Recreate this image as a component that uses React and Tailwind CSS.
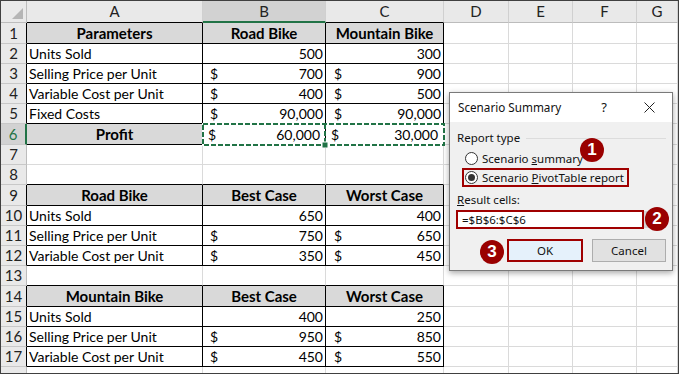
import React from 'react';

const COLS = ['A', 'B', 'C', 'D', 'E', 'F', 'G'];

// row number -> cell contents for columns A..C
const DATA = {
  1: { head: true, a: 'Parameters', b: 'Road Bike', c: 'Mountain Bike' },
  2: { a: 'Units Sold', b: ['', '500'], c: ['', '300'] },
  3: { a: 'Selling Price per Unit', b: ['$', '700'], c: ['$', '900'] },
  4: { a: 'Variable Cost per Unit', b: ['$', '400'], c: ['$', '500'] },
  5: { a: 'Fixed Costs', b: ['$', '90,000'], c: ['$', '90,000'] },
  6: { profit: true, a: 'Profit', b: ['$', '60,000'], c: ['$', '30,000'] },
  9: { head: true, a: 'Road Bike', b: 'Best Case', c: 'Worst Case' },
  10: { a: 'Units Sold', b: ['', '650'], c: ['', '400'] },
  11: { a: 'Selling Price per Unit', b: ['$', '750'], c: ['$', '650'] },
  12: { a: 'Variable Cost per Unit', b: ['$', '350'], c: ['$', '450'] },
  14: { head: true, a: 'Mountain Bike', b: 'Best Case', c: 'Worst Case' },
  15: { a: 'Units Sold', b: ['', '400'], c: ['', '250'] },
  16: { a: 'Selling Price per Unit', b: ['$', '950'], c: ['$', '850'] },
  17: { a: 'Variable Cost per Unit', b: ['$', '450'], c: ['$', '550'] },
};

const inTable = (r, c) => c >= 1 && c <= 3 && !!DATA[r];

function Money({ v, profit, col }) {
  const [sym, num] = v;
  return (
    <div className="flex w-full items-center justify-between">
      <span className={profit ? 'pl-[5px]' : col === 2 ? 'pl-[7px]' : 'pl-[8px]'}>{sym}</span>
      <span className={profit ? 'pr-[5px]' : 'pr-[2px]'}>{num}</span>
    </div>
  );
}

function Cell({ r, c }) {
  const row = DATA[r];
  const right = inTable(r, c) || inTable(r, c + 1) ? 'border-r-black' : 'border-r-[#dadada]';
  const bottom = inTable(r, c) || inTable(r + 1, c) ? 'border-b-black' : 'border-b-[#dadada]';
  let bg = 'bg-white';
  let content = null;
  if (row && c >= 1 && c <= 3) {
    if (row.head) {
      bg = 'bg-[#d9d9d9]';
      const t = c === 1 ? row.a : c === 2 ? row.b : row.c;
      content = <div className="w-full text-center text-[15px] font-bold">{t}</div>;
    } else if (c === 1) {
      if (row.profit) {
        bg = 'bg-[#d9d9d9]';
        content = <div className="w-full text-center text-[15px] font-bold">{row.a}</div>;
      } else {
        content = <div className="pl-[2px] whitespace-nowrap">{row.a}</div>;
      }
    } else {
      content = <Money v={c === 2 ? row.b : row.c} profit={row.profit} col={c} />;
    }
  }
  return (
    <div className={`flex items-center overflow-hidden border-r border-b ${right} ${bottom} ${bg}`}>
      {content}
    </div>
  );
}

function RowHeader({ r }) {
  const sel = r === 6;
  const right = sel
    ? 'border-r-2 border-r-[#217346]'
    : inTable(r, 1)
      ? 'border-r border-r-black'
      : 'border-r border-r-[#bcbcbc]';
  return (
    <div
      className={`flex items-center justify-center border-b border-b-[#c8c8c8] text-[15px] ${right} ${
        sel ? 'bg-[#d2d2d2] text-[#217346]' : 'bg-[#e9e9e9] text-[#222]'
      }`}
    >
      {r <= 17 ? r : ''}
    </div>
  );
}

function ColHeader({ c }) {
  const sel = c === 2;
  const bottom = sel
    ? 'border-b-2 border-b-[#217346]'
    : inTable(1, c)
      ? 'border-b border-b-black'
      : 'border-b border-b-[#bcbcbc]';
  return (
    <div
      className={`flex items-center justify-center border-r border-r-[#d0d0d0] text-[15px] ${bottom} ${
        sel ? 'bg-[#d2d2d2]' : 'bg-[#e9e9e9]'
      } text-[#222]`}
    >
      {COLS[c - 1]}
    </div>
  );
}

function Badge({ n, className }) {
  return (
    <div
      className={`absolute flex h-[24px] w-[24px] items-center justify-center rounded-full bg-[#9a0000] text-[17px] font-bold text-white ${className}`}
      style={{ fontFamily: '"Liberation Sans", Arial, sans-serif' }}
    >
      {n}
    </div>
  );
}

function Radio({ on }) {
  return (
    <span className="flex h-[13px] w-[13px] items-center justify-center rounded-full border border-[#333] bg-white">
      {on && <span className="h-[7px] w-[7px] rounded-full bg-[#333]" />}
    </span>
  );
}

function Dialog() {
  return (
    <div
      className="absolute left-[448px] top-[91px] flex h-[179px] w-[224px] flex-col border border-[#7a7a7a] bg-[#f0f0f0] text-[11.5px] text-[#111] shadow-[0_2px_6px_rgba(0,0,0,0.35)]"
      style={{ fontFamily: '"Noto Sans", "Open Sans", sans-serif' }}
    >
      <div className="flex h-[29px] items-center bg-white pl-[8px] pr-[17px]">
        <span className="text-[11.7px]">Scenario Summary</span>
        <span className="ml-auto mr-[37px] text-[13px]">?</span>
        <svg width="11" height="11" viewBox="0 0 11 11">
          <path d="M0.5 0.5 L10.5 10.5 M10.5 0.5 L0.5 10.5" stroke="#222" strokeWidth="1" />
        </svg>
      </div>
      <div className="flex flex-1 flex-col px-[6px] pt-[8px]">
        <div className="flex h-[16px] items-center pl-[1px]">
          <span>Report type</span>
          <span className="ml-[6px] h-px flex-1 bg-[#dcdcdc]" />
        </div>
        <div className="mt-[3px] ml-[6px] flex h-[19px] w-fit items-center gap-[4px] border-2 border-transparent pl-[1px] pr-[2px]">
          <Radio />
          <span>
            Scenario <span className="underline">s</span>ummary
          </span>
        </div>
        <div className="ml-[6px] flex h-[19px] w-fit items-center gap-[4px] border-2 border-[#a00000] pl-[1px] pr-[3px]">
          <Radio on />
          <span>
            Scenario <span className="underline">P</span>ivotTable report
          </span>
        </div>
        <div className="mt-[5px] flex h-[16px] items-center pl-[1px]">
          <span>
            <span className="underline">R</span>esult cells:
          </span>
        </div>
        <div className="mt-[2px] flex items-center">
          <div className="flex h-[19px] w-[189px] items-center border-2 border-[#a00000] bg-white pl-[4px]">
            =$B$6:$C$6
          </div>
          <div className="h-[17px] w-[22px] bg-[#d4d4d4]" />
        </div>
        <div className="mt-[10px] flex">
          <div className="ml-[51px] flex h-[23px] w-[76px] items-center justify-center border-2 border-[#a00000] bg-[#e5f1fb]">
            OK
          </div>
          <div className="ml-[9px] flex h-[23px] w-[74px] items-center justify-center border border-[#adadad] bg-[#e1e1e1]">
            Cancel
          </div>
        </div>
      </div>
    </div>
  );
}

export default function App() {
  const rows = Array.from({ length: 18 }, (_, i) => i + 1);
  return (
    <div className="h-[374px] w-[679px] border border-[#404040] bg-white">
      <div
        className="relative h-[372px] w-[677px] overflow-hidden text-[14px] text-black"
        style={{ fontFamily: 'Lato, "Liberation Sans", sans-serif' }}
      >
        <div className="grid grid-cols-[26px_176px_123px_118px_65px_64px_64px_1fr] grid-rows-[22px_21px_20px_20px_20px_20px_21px_20px_20px_21px_20px_20px_20px_20px_21px_20px_20px_20px_20px]">
          <div className="relative border-r border-b border-r-[#bcbcbc] border-b-[#bcbcbc] bg-[#e9e9e9]">
            <svg className="absolute bottom-[3px] right-[3px]" width="11" height="11" viewBox="0 0 11 11">
              <polygon points="11,0 11,11 0,11" fill="#b5b5b5" />
            </svg>
          </div>
          {[1, 2, 3, 4, 5, 6, 7].map((c) => (
            <ColHeader key={c} c={c} />
          ))}
          {rows.map((r) => (
            <React.Fragment key={r}>
              <RowHeader r={r} />
              {[1, 2, 3, 4, 5, 6, 7].map((c) => (
                <Cell key={c} r={r} c={c} />
              ))}
            </React.Fragment>
          ))}
        </div>

        {/* marching ants around B6:C6 */}
        <svg className="pointer-events-none absolute left-[200px] top-[121px]" width="245" height="26" viewBox="0 0 245 26">
          <rect x="2" y="2" width="241" height="21" fill="none" stroke="#ffffff" strokeWidth="2" />
          <rect x="2" y="2" width="241" height="21" fill="none" stroke="#217346" strokeWidth="2" strokeDasharray="5 2" />
          <line x1="124" y1="2" x2="124" y2="23" stroke="#217346" strokeWidth="2" strokeDasharray="5 2" />
          <rect x="121" y="20" width="6" height="6" fill="#217346" stroke="#ffffff" strokeWidth="1" />
        </svg>

        <Dialog />

        <Badge n="1" className="left-[579px] top-[137px]" />
        <Badge n="2" className="left-[644px] top-[206px]" />
        <Badge n="3" className="left-[479px] top-[239px]" />
      </div>
    </div>
  );
}
